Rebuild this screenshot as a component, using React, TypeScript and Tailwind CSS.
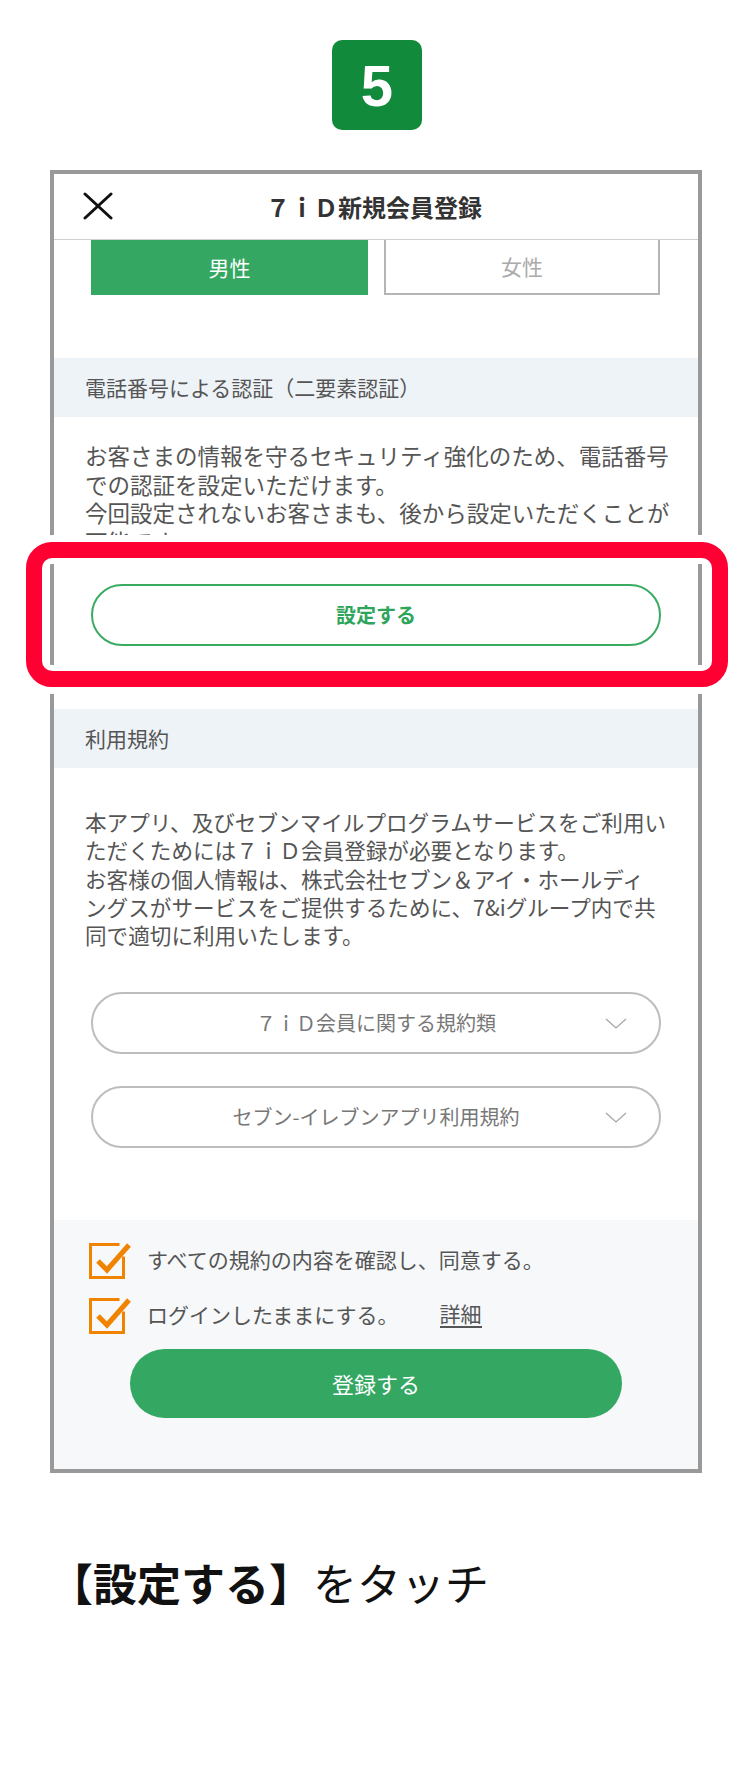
import React from 'react'

const jp = "font-['Noto_Sans_CJK_JP',sans-serif]"

const CloseIcon = () => (
  <svg width="30" height="28" viewBox="0 0 30 28" fill="none" stroke="#111" strokeWidth="3" strokeLinecap="round">
    <path d="M2 2L28 26" />
    <path d="M28 2L2 26" />
  </svg>
)

const Chevron = () => (
  <svg width="22" height="11" viewBox="0 0 22 11" fill="none" stroke="#a5a5a5" strokeWidth="1.2">
    <path d="M1 1L11 10L21 1" />
  </svg>
)

const CheckBox = () => (
  <svg width="44" height="40" viewBox="0 0 44 40" fill="none" stroke="#f08300" strokeLinecap="square">
    <path d="M29 5.5H1.5V38.5H34.5V19" strokeWidth="3" />
    <path d="M9 22L18 31L40 6" strokeWidth="5" strokeLinecap="butt" />
  </svg>
)

const SectionTitle = ({ children }: { children: React.ReactNode }) => (
  <div className="flex h-[59px] items-center bg-[#eef3f7] pl-[31px] text-[21px] text-[#555]">
    {children}
  </div>
)

const TermsButton = ({ label }: { label: string }) => (
  <button className="mx-[37px] grid h-[62px] grid-cols-[1fr_auto_1fr] items-center rounded-full border-2 border-[#bdbdbd] bg-white">
    <span />
    <span className="text-[20px] text-[#777]">{label}</span>
    <span className="mr-[32px] flex justify-end">
      <Chevron />
    </span>
  </button>
)

export default function App() {
  return (
    <div className={`relative min-h-[1780px] w-[750px] bg-white ${jp}`}>
      {/* step number */}
      <div className="flex justify-center pt-[40px] pl-[4px]">
        <div className="flex h-[90px] w-[90px] items-center justify-center rounded-[10px] bg-[#118a3c] font-['Liberation_Sans',Arial,sans-serif] text-[58px] font-bold text-white">
          5
        </div>
      </div>

      {/* phone screen */}
      <div className="mt-[40px] ml-[50px] flex w-[652px] flex-col border-4 border-[#999]">
        <div className="relative flex h-[66px] items-center justify-center border-b border-[#cfcfcf]">
          <div className="absolute top-[18px] left-[29px]">
            <CloseIcon />
          </div>
          <span className="pr-[4px] text-[24px] font-bold text-[#333]">７ｉＤ新規会員登録</span>
        </div>

        <div className="flex gap-[16px] px-[37px]">
          <div className="flex h-[55px] w-[277px] items-center justify-center bg-[#34a862] text-[21px] text-white">
            男性
          </div>
          <div className="flex h-[55px] w-[276px] items-center justify-center border-x-2 border-b-2 border-[#b5b5b5] text-[21px] text-[#aaa]">
            女性
          </div>
        </div>

        <div className="mt-[63px]">
          <SectionTitle>電話番号による認証（二要素認証）</SectionTitle>
        </div>
        <p className="px-[31px] pt-[24px] text-[22.5px] leading-[28.5px] whitespace-nowrap text-[#555]">
          お客さまの情報を守るセキュリティ強化のため、電話番号
          <br />
          での認証を設定いただけます。
          <br />
          今回設定されないお客さまも、後から設定いただくことが
          <br />
          可能です。
        </p>
        <button className="mx-[37px] mt-[29px] flex h-[62px] items-center justify-center rounded-full border-2 border-[#3aab60] text-[20px] font-bold text-[#2ea55a]">
          設定する
        </button>

        <div className="mt-[63px]">
          <SectionTitle>利用規約</SectionTitle>
        </div>
        <p className="px-[31px] pt-[40px] text-[21.6px] leading-[28.3px] whitespace-nowrap text-[#555]">
          本アプリ、及びセブンマイルプログラムサービスをご利用い
          <br />
          ただくためには７ｉＤ会員登録が必要となります。
          <br />
          お客様の個人情報は、株式会社セブン＆アイ・ホールディ
          <br />
          ングスがサービスをご提供するために、7&amp;iグループ内で共
          <br />
          同で適切に利用いたします。
        </p>

        <div className="mt-[43px] flex flex-col gap-[32px]">
          <TermsButton label="７ｉＤ会員に関する規約類" />
          <TermsButton label="セブン-イレブンアプリ利用規約" />
        </div>

        <div className="mt-[72px] bg-[#f6f8fa] pt-[19px] pb-[51px]">
          <div className="flex flex-col gap-[15px] pl-[35px]">
            <div className="flex h-[40px] items-center gap-[14px]">
              <CheckBox />
              <span className="text-[21px] text-[#555]">すべての規約の内容を確認し、同意する。</span>
            </div>
            <div className="flex h-[40px] items-center gap-[14px]">
              <CheckBox />
              <span className="text-[21px] text-[#555]">ログインしたままにする。</span>
              <span className="ml-[27px] border-b-2 border-[#555] text-[21px] leading-[26px] text-[#555]">詳細</span>
            </div>
          </div>
          <button className="mx-auto mt-[15px] flex h-[69px] w-[492px] items-center justify-center rounded-full bg-[#34a862] text-[22px] text-white">
            登録する
          </button>
        </div>
      </div>

      <p className="mt-[83px] pl-[49px] text-[44px] leading-[53px] text-[#111]">
        <span className="font-bold">【設定する】</span>
        <span className="font-normal">をタッチ</span>
      </p>

      {/* highlight around the setup button */}
      <div className="absolute top-[542px] left-[26px] h-[145px] w-[702px] rounded-[26px] border-[16px] border-[#ff0033] shadow-[0_0_0_7px_#fff,inset_0_0_0_6px_#fff]" />
    </div>
  )
}
